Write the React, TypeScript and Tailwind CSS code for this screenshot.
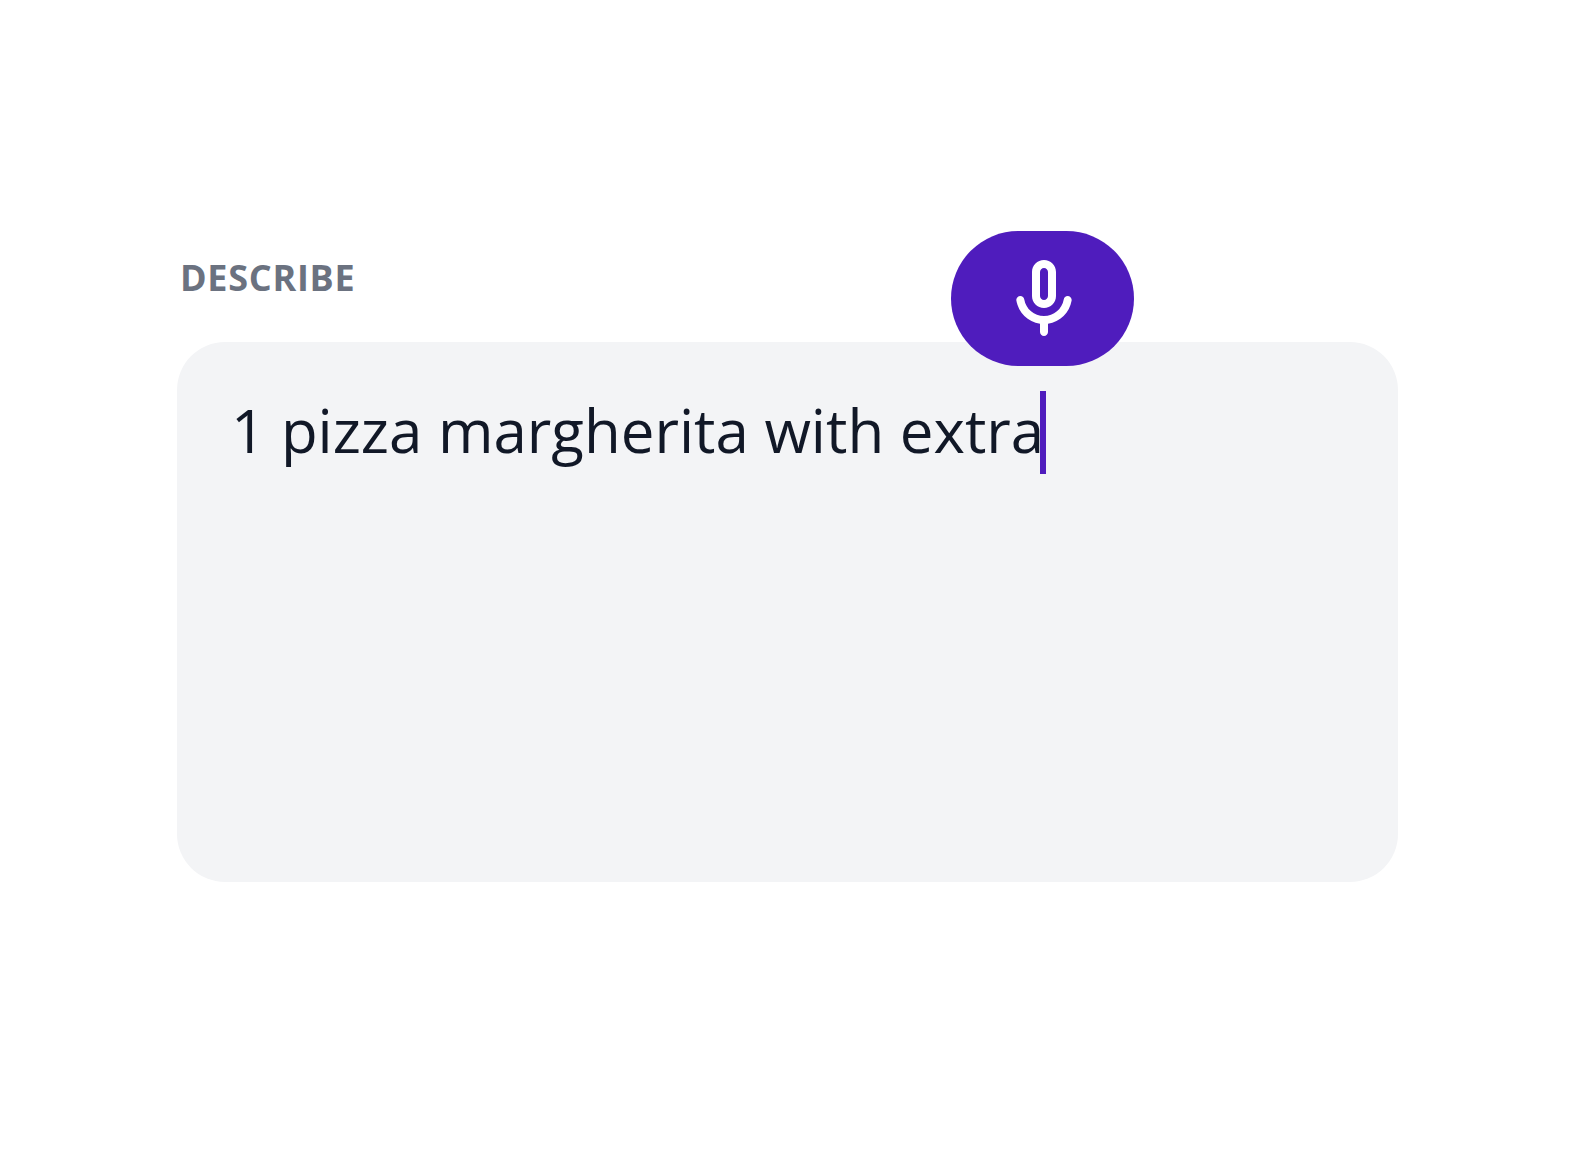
import { useState } from "react";

function MicIcon() {
  return (
    <svg viewBox="0 0 24 24" className="size-24" fill="currentColor" aria-hidden="true">
      <path d="M12 14c1.66 0 3-1.34 3-3V5c0-1.66-1.34-3-3-3S9 3.34 9 5v6c0 1.66 1.34 3 3 3zm-1-9c0-.55.45-1 1-1s1 .45 1 1v6c0 .55-.45 1-1 1s-1-.45-1-1V5z" />
      <path d="M17.91 11c-.49 0-.9.36-.98.85C16.52 14.2 14.47 16 12 16s-4.52-1.8-4.93-4.15c-.08-.49-.49-.85-.98-.85-.61 0-1.09.54-1 1.14.49 3 2.89 5.35 5.91 5.78V20c0 .55.45 1 1 1s1-.45 1-1v-2.08c3.02-.43 5.42-2.78 5.91-5.78.1-.6-.39-1.14-1-1.14z" />
    </svg>
  );
}

export default function App() {
  const [text, setText] = useState("1 pizza margherita with extra");

  return (
    <main className="min-h-screen bg-white pt-[254px] pr-[174px] pb-12 pl-[177px] font-['Open_Sans',sans-serif]">
      <label
        htmlFor="describe"
        className="mb-10 block pl-[3px] text-[36px] leading-12 font-bold tracking-[0.02em] text-[#6b7280] uppercase"
      >
        Describe
      </label>
      <div className="relative">
        <textarea
          id="describe"
          rows={5}
          value={text}
          onChange={(e) => setText(e.target.value)}
          spellCheck={false}
          className="block w-full resize-none rounded-[48px] bg-[#f3f4f6] px-[54px] pt-[43px] pb-[47px] text-[60px] leading-[90px] text-[#111827] caret-transparent outline-none"
        />
        {/* dictation cursor with its mic bubble */}
        <div className="absolute -top-[111px] left-[774px] flex flex-col items-center gap-[25px]">
          <button
            type="button"
            aria-label="Dictate"
            className="rounded-full bg-[#4f1cbd] pt-[21px] pr-[42px] pb-[18px] pl-[45px] text-white"
          >
            <MicIcon />
          </button>
          <span className="h-[83px] w-[6px] bg-[#4f1cbd]" />
        </div>
      </div>
    </main>
  );
}
